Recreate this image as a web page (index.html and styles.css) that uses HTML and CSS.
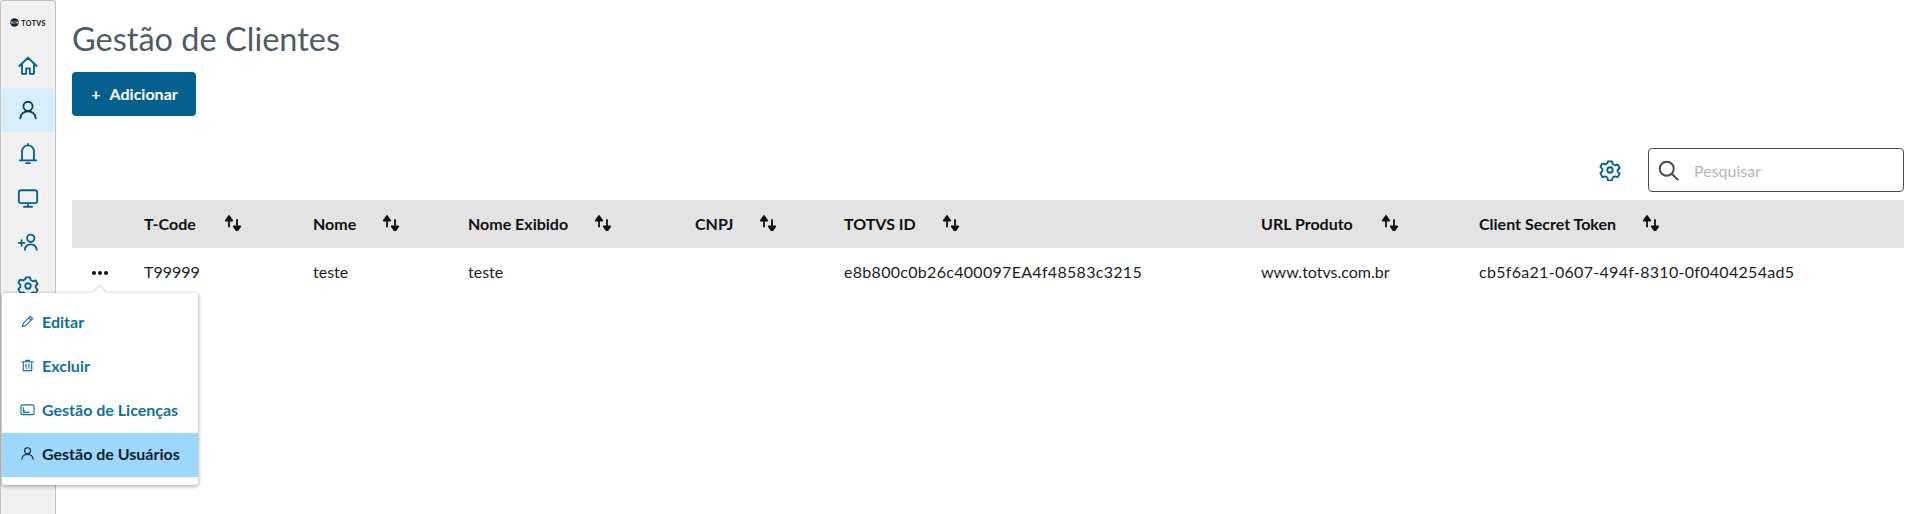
FILE: index.html
```html
<!DOCTYPE html>
<html lang="pt-BR">
<head>
  <meta charset="UTF-8">
  <title>Gestão de Clientes</title>
  <link rel="stylesheet" href="styles.css">
</head>
<body>
  <div class="app">

    <!-- MENU LATERAL -->
    <aside class="sidebar">
      <div class="logo">
        <svg class="logo-mark" viewBox="0 0 16 16"><circle cx="8" cy="8" r="7.500" fill="#1a2530"/><path d="M2 6.600h12v2.800H2z" fill="#f2f2f2"/><path d="M5 8h6" stroke="#1a2530" stroke-width="1.400"/></svg>
        <span>TOTVS</span>
      </div>
      <a class="side-item" href="#"><svg viewBox="0 0 24 24"><path d="M2.500 12 12 3l9.500 9M5.500 10v10.500h4.500v-6h4v6h4.500V10"/></svg></a>
      <a class="side-item active" href="#"><svg class="dark" viewBox="0 0 24 24"><circle cx="12" cy="8" r="5"/><path d="M3.500 21c.8-5 4-7.500 8.500-7.500s7.700 2.500 8.500 7.500"/></svg></a>
      <a class="side-item" href="#"><svg viewBox="0 0 24 24"><path d="M5.500 19V9a6.500 6.500 0 0 1 13 0v10M3 19h18M12 1v1.500M10 22h4"/></svg></a>
      <a class="side-item" href="#"><svg viewBox="0 0 24 24"><rect x="2" y="3.500" width="20" height="14" rx="2.500"/><path d="M12 17.500V21M7.500 21.500h9"/></svg></a>
      <a class="side-item" href="#"><svg viewBox="0 0 24 24"><circle cx="15" cy="8" r="4"/><path d="M8.500 20.500c.4-4 3-6 6.500-6s6.100 2 6.500 6M2 13h6M5 10v6"/></svg></a>
      <a class="side-item" href="#"><svg viewBox="0 0 24 24"><circle cx="12" cy="12" r="3"/><path d="M9.800 2.500h4.400l.7 3 2.500 1.400 3-.9 2.100 3.800-2.200 2.200v1.800l2.200 2.200-2.100 3.800-3-.9-2.500 1.400-.7 3H9.800l-.7-3-2.500-1.400-3 .9L1.500 15.500l2.200-2.200v-2.600L1.500 8.500l2.100-3.500 3 .9 2.500-1.400z"/></svg></a>
    </aside>

    <!-- CONTEUDO -->
    <main class="content">
      <h1>Gestão de Clientes</h1>
      <button class="btn-add"><span class="plus">+</span>Adicionar</button>

      <div class="toolbar">
        <svg class="toolbar-gear" viewBox="0 0 24 24"><circle cx="12" cy="12" r="3"/><path d="M9.800 2.500h4.400l.7 3 2.500 1.400 3-.9 2.100 3.800-2.200 2.200v1.800l2.200 2.200-2.100 3.800-3-.9-2.500 1.400-.7 3H9.800l-.7-3-2.500-1.400-3 .9L1.500 15.500l2.200-2.200v-2.600L1.500 8.500l2.100-3.500 3 .9 2.500-1.400z"/></svg>
        <div class="search">
          <svg viewBox="0 0 24 24"><circle cx="10" cy="10" r="8"/><path d="m16 16 6.500 6.500"/></svg>
          <span>Pesquisar</span>
        </div>
      </div>

      <div class="table">
        <div class="row head">
          <div></div>
          <div class="cell wide"><span class="label">T-Code</span><svg class="sort" viewBox="0 0 18 16"><path d="M5 11.500V4M1.800 5.500 5 1l3.200 4.500zM13 5v8M9.800 11.500 13 16l3.200-4.500z"/></svg></div>
          <div class="cell"><span class="label">Nome</span><svg class="sort" viewBox="0 0 18 16"><path d="M5 11.500V4M1.800 5.500 5 1l3.200 4.500zM13 5v8M9.800 11.500 13 16l3.200-4.500z"/></svg></div>
          <div class="cell"><span class="label">Nome Exibido</span><svg class="sort" viewBox="0 0 18 16"><path d="M5 11.500V4M1.800 5.500 5 1l3.200 4.500zM13 5v8M9.800 11.500 13 16l3.200-4.500z"/></svg></div>
          <div class="cell"><span class="label">CNPJ</span><svg class="sort" viewBox="0 0 18 16"><path d="M5 11.500V4M1.800 5.500 5 1l3.200 4.500zM13 5v8M9.800 11.500 13 16l3.200-4.500z"/></svg></div>
          <div class="cell"><span class="label">TOTVS ID</span><svg class="sort" viewBox="0 0 18 16"><path d="M5 11.500V4M1.800 5.500 5 1l3.200 4.500zM13 5v8M9.800 11.500 13 16l3.200-4.500z"/></svg></div>
          <div class="cell wide"><span class="label">URL Produto</span><svg class="sort" viewBox="0 0 18 16"><path d="M5 11.500V4M1.800 5.500 5 1l3.200 4.500zM13 5v8M9.800 11.500 13 16l3.200-4.500z"/></svg></div>
          <div class="cell"><span class="label">Client Secret Token</span><svg class="sort" viewBox="0 0 18 16"><path d="M5 11.500V4M1.800 5.500 5 1l3.200 4.500zM13 5v8M9.800 11.500 13 16l3.200-4.500z"/></svg></div>
        </div>
        <div class="row body">
          <div class="dots"><i></i><i></i><i></i></div>
          <div>T99999</div>
          <div>teste</div>
          <div>teste</div>
          <div></div>
          <div class="hash">e8b800c0b26c400097EA4f48583c3215</div>
          <div>www.totvs.com.br</div>
          <div class="hash">cb5f6a21-0607-494f-8310-0f0404254ad5</div>
        </div>
      </div>
    </main>
  </div>

  <!-- Menu de acoes -->
  <div class="popup">
    <a class="popup-item" href="#"><svg viewBox="0 0 16 16"><path d="M2.500 13.500 3.500 10 11 2.500l2.500 2.500L6 12.500zM9.500 4l2.500 2.500"/></svg>Editar</a>
    <a class="popup-item" href="#"><svg viewBox="0 0 16 16"><path d="M2 4h12M6 4V2.500h4V4M3.500 4v9.500h9V4M6.500 6.500v4.500M9.500 6.500v4.500"/></svg>Excluir</a>
    <a class="popup-item" href="#"><svg viewBox="0 0 16 16"><rect x="1" y="3" width="14" height="10.500" rx="1.500"/><path d="M3.500 9.500h1.500M3.500 11h6.500M3.500 6v3"/></svg>Gestão de Licenças</a>
    <a class="popup-item selected" href="#"><svg viewBox="0 0 16 16"><circle cx="8" cy="5" r="3.200"/><path d="M2 14c.4-3.500 2.800-5 6-5s5.600 1.500 6 5"/></svg>Gestão de Usuários</a>
  </div>
</body>
</html>
```

FILE: styles.css
```css
/* base */
html, body {
  margin: 0; padding: 0;
  height: 100%;
  overflow: hidden;
  background: #fff;
  font-family: 'Lato', sans-serif;
  color: #1d1d1d;
}
a { text-decoration: none; color: inherit; }
svg { fill: none; stroke-linecap: round; stroke-linejoin: round; }

.app { display: flex; height: 514px; }

/* sidebar */
.sidebar {
  width: 54px; flex: none;
  background: #f1f1f1;
  border-left: 1px solid #c4c4c4;
  border-right: 1px solid #c4c4c4;
  border-top: 1px solid #c4c4c4;
  border-radius: 3px 3px 0 0;
  display: flex; flex-direction: column;
}
.logo {
  height: 43px;
  display: flex; align-items: center; justify-content: center; gap: 2px;
  font-size: 7px; font-weight: 900; letter-spacing: .4px; color: #1a2530;
}
.logo-mark { width: 9px; height: 9px; }
.side-item {
  height: 44px;
  display: flex; align-items: center; justify-content: center;
}
.side-item svg { width: 22px; height: 22px; stroke: #05608f; stroke-width: 2; }
.side-item svg.dark { stroke: #0c3c58; }
.side-item.active { background: #d9eefc; border-radius: 3px; }

/* content */
.content { flex: 1; padding: 0 15px 0 16px; min-width: 0; }
h1 {
  margin: 0; padding-top: 17px; padding-bottom: 1px;
  font-size: 32.5px; line-height: 44px; font-weight: 400;
  color: #4e5c66;
}
.btn-add {
  display: flex; align-items: center; justify-content: center;
  width: 124px; height: 44px;
  margin-top: 10px; padding: 0 0 2px 1px;
  background: #05608f; color: #fff;
  border: none; border-radius: 4px;
  font-family: inherit; font-size: 16px; font-weight: 700;
}
.plus { margin-right: 9px; font-size: 16px; }

.toolbar {
  display: flex; justify-content: flex-end; align-items: center; gap: 27px;
  margin-top: 32px;
}
.toolbar-gear { width: 22px; height: 22px; stroke: #05608f; stroke-width: 2; }
.search {
  width: 256px; height: 44px;
  box-sizing: border-box;
  border: 1px solid #4a4a4a; border-radius: 4px;
  display: flex; align-items: center; gap: 15px;
  padding-left: 9px;
  font-size: 16px; color: #b9b4b2;
}
.search svg { width: 21px; height: 21px; stroke: #4a4a4a; stroke-width: 2.200; }

/* table */
.table { margin-top: 8px; }
.row {
  display: grid;
  grid-template-columns: 72px 169px 155px 227px 149px 417px 218px 1fr;
  align-items: center;
  font-size: 16px;
}
.row > div { padding-bottom: 2px; }
.row.head { height: 48px; background: #e3e3e3; font-weight: 700; color: #111; }
.row.body { height: 48px; }
.hash { letter-spacing: .3px; }
.cell { display: flex; align-items: center; }
.label { min-width: 0; }
.sort { width: 18px; height: 16px; margin-left: 26px; fill: #111; stroke: #111; stroke-width: 1.800; }
.cell.wide .sort { margin-left: 28px; }

.row > .dots { display: flex; justify-content: center; gap: 2px; padding: 2px 18px 0 1px; }
.dots i { width: 4px; height: 4px; border-radius: 50%; background: #111; }

/* popup */
.popup {
  position: absolute; left: 2px; top: 293px;
  width: 196px; height: 192px;
  padding-top: 8px; box-sizing: border-box;
  background: #fff;
  border-radius: 3px;
  box-shadow: 0 1px 4px rgba(0,0,0,0.4);
}
.popup::before {
  content: ''; position: absolute; left: 93px; top: -5px;
  width: 9px; height: 9px;
  background: #fff;
  transform: rotate(45deg);
  box-shadow: -1px -1px 1px rgba(0,0,0,0.15);
}
.popup-item {
  position: relative;
  display: flex; align-items: center; gap: 7px;
  height: 44px; padding-left: 18px; padding-bottom: 4px; box-sizing: border-box;
  font-size: 16px; font-weight: 700; color: #0f7299;
}
.popup-item svg { width: 15px; height: 15px; stroke: currentColor; stroke-width: 1.200; }
.popup-item.selected { background: #9dd7fb; color: #10212e; }
```
